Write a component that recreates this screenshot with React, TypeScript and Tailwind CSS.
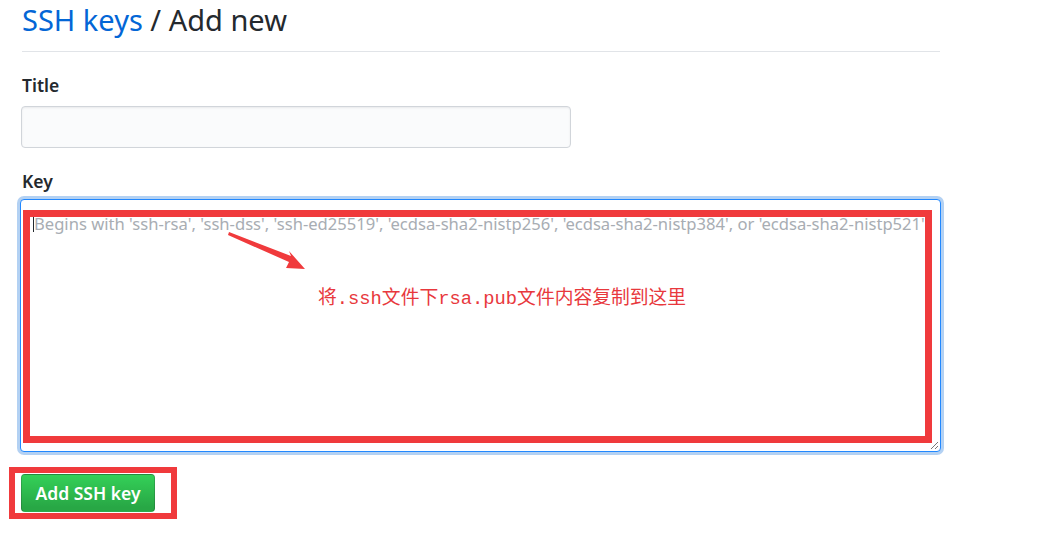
import React from "react";

const sans = { fontFamily: '"Noto Sans", "Open Sans", Arial, sans-serif' };
const note = { fontFamily: '"Liberation Mono", "Noto Sans CJK SC", monospace' };

const placeholder =
  "Begins with 'ssh-rsa', 'ssh-dss', 'ssh-ed25519', 'ecdsa-sha2-nistp256', 'ecdsa-sha2-nistp384', or 'ecdsa-sha2-nistp521'";

export default function App() {
  return (
    <div className="h-[541px] w-[1040px] overflow-hidden bg-white" style={sans}>
      <div className="w-[940px] pl-[22px]">
        {/* header */}
        <div className="border-b border-[#e1e4e8] pb-[11px]">
          <h2 className="text-[29px] leading-[40px] font-normal text-[#24292e]">
            <a className="text-[#0366d6]">SSH keys</a> / Add new
          </h2>
        </div>

        <form className="flex flex-col">
          <label className="mt-5 mb-2 text-[17.5px] leading-[26px] font-semibold text-[#24292e]">Title</label>
          <input
            className="-ml-px h-[42px] w-[550px] rounded-[4px] border border-[#d1d5da] bg-[#fafbfc] shadow-[inset_0_1px_2px_rgba(27,31,35,0.075)] outline-none"
            type="text"
          />

          <label className="mt-5 mb-[5px] text-[17.5px] leading-[26px] font-semibold text-[#24292e]">Key</label>
          <div className="relative -ml-[2px] h-[253px] w-[921px] rounded-[4px] border border-[#2188ff] bg-white shadow-[0_0_0_3px_rgba(3,102,214,0.3)]">
            <div className="flex items-start px-3 pt-[12px]">
              <span className="mt-[3px] h-[17px] w-px shrink-0 bg-[#24292e]" />
              <span className="overflow-hidden text-[16.6px] leading-[24px] whitespace-nowrap text-[#a8adb3]">
                {placeholder}
              </span>
            </div>

            {/* resize grip */}
            <svg className="absolute right-[1px] bottom-[1px]" width="10" height="10" viewBox="0 0 10 10">
              <path d="M9 2 L2 9 M9 6 L6 9" stroke="#777" strokeWidth="1" />
            </svg>

            {/* annotation */}
            <div className="pointer-events-none absolute top-[10px] left-[2px] h-[233px] w-[909px] border-[7px] border-[#f03a3c]" />
            <svg className="pointer-events-none absolute top-0 left-0" width="921" height="253">
              <polygon
                points="208,32 270,56 268,51 284,69 265,68 268,62 207,35"
                fill="#f03a3c"
              />
            </svg>
            <div
              className="absolute top-[88px] left-[297px] text-[18.8px] leading-[22px] whitespace-nowrap text-[#e8383d]"
              style={note}
            >
              将.ssh文件下rsa.pub文件内容复制到这里
            </div>
          </div>

          <div className="relative mt-[22px] -ml-px w-fit">
            <button
              type="button"
              className="h-[38px] w-[134px] rounded-[4px] border border-[rgba(27,31,35,0.2)] bg-[linear-gradient(-180deg,#34d058_0%,#28a745_90%)] text-[17.5px] font-semibold text-white"
            >
              Add SSH key
            </button>
            <div className="pointer-events-none absolute -top-[7px] -left-[12px] h-[52px] w-[168px] border-[6px] border-[#f03a3c]" />
          </div>
        </form>
      </div>
    </div>
  );
}
